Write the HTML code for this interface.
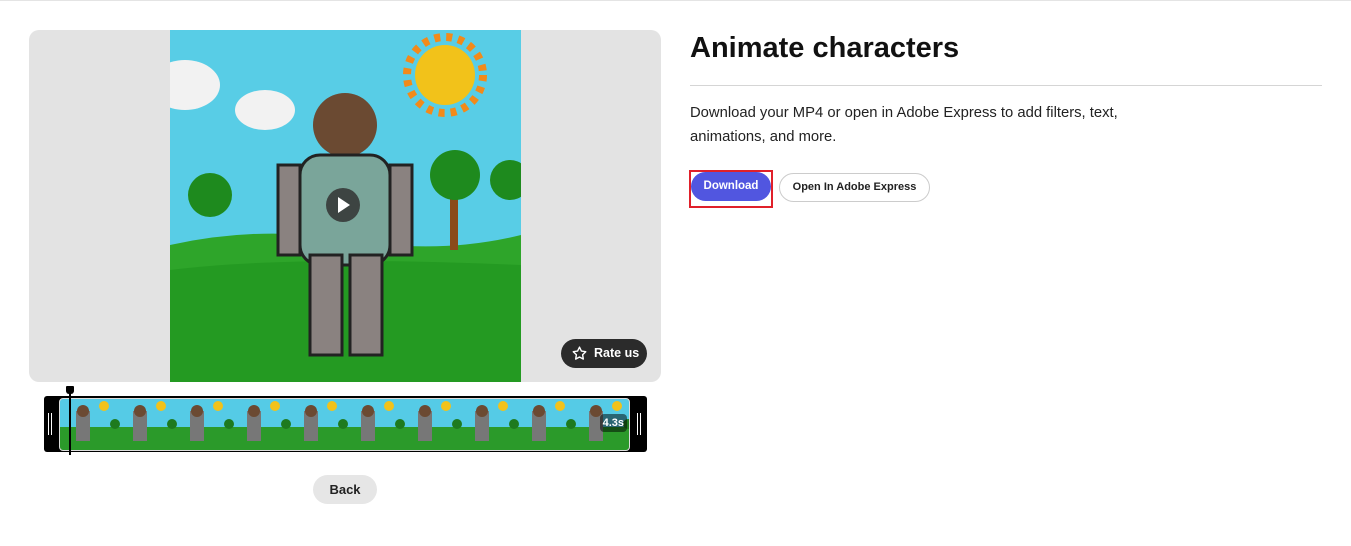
<!DOCTYPE html>
<html><head><style>
body{margin:0;width:1351px;height:546px;background:#fff;font-family:"Liberation Sans",sans-serif;position:relative;overflow:hidden;border-top:1px solid #e4e4e4;box-sizing:border-box}
.abs{position:absolute}
</style></head><body>
<div class="abs" style="left:29px;top:29px;width:632px;height:352px;background:#e3e3e3;border-radius:10px;overflow:hidden">
 <svg class="abs" style="left:141px;top:0" width="351" height="352" viewBox="0 0 351 352">
  <rect width="351" height="352" fill="#58cde6"/>
  <path d="M0 215 Q90 195 180 210 T351 205 V352 H0Z" fill="#2ea52a"/>
  <path d="M0 240 Q120 225 351 235 V352 H0Z" fill="#249a22"/>
  <ellipse cx="15" cy="55" rx="35" ry="25" fill="#f2f2f2"/>
  <ellipse cx="95" cy="80" rx="30" ry="20" fill="#f2f2f2"/>
  <circle cx="275" cy="45" r="30" fill="#f2c21a"/>
  <circle cx="275" cy="45" r="38" fill="none" stroke="#f28a1a" stroke-width="8" stroke-dasharray="6 6"/>
  <rect x="280" y="160" width="8" height="60" fill="#8a4a1a"/><circle cx="285" cy="145" r="25" fill="#1e8a1e"/>
  <circle cx="40" cy="165" r="22" fill="#1e8a1e"/><circle cx="340" cy="150" r="20" fill="#1e8a1e"/>
  <circle cx="175" cy="95" r="32" fill="#6b4a32"/>
  <rect x="130" y="125" width="90" height="110" rx="20" fill="#7aa59a" stroke="#222" stroke-width="3"/>
  <rect x="140" y="225" width="32" height="100" fill="#8a8280" stroke="#222" stroke-width="3"/>
  <rect x="180" y="225" width="32" height="100" fill="#8a8280" stroke="#222" stroke-width="3"/>
  <rect x="108" y="135" width="22" height="90" fill="#8a8280" stroke="#222" stroke-width="3"/>
  <rect x="220" y="135" width="22" height="90" fill="#8a8280" stroke="#222" stroke-width="3"/>
  <circle cx="173" cy="175" r="17" fill="#333" opacity=".85"/><path d="M168 167 L180 175 L168 183Z" fill="#fff"/>
 </svg>
 <div class="abs" style="left:532px;top:309px;width:86px;height:29px;background:#2b2b2b;border-radius:15px;color:#fff;font-size:12.5px;font-weight:bold;line-height:29px">
  <svg class="abs" style="left:10px;top:6px" width="17" height="17" viewBox="0 0 24 24"><path d="M12 3l2.7 5.6 6.1.9-4.4 4.3 1 6.1L12 17l-5.4 2.9 1-6.1L3.2 9.5l6.1-.9z" fill="none" stroke="#fff" stroke-width="2" stroke-linejoin="round"/></svg>
  <span class="abs" style="left:33px">Rate us</span></div>
</div>
<div class="abs" style="left:44px;top:395px;width:603px;height:56px;background:#000;border-radius:3px"></div>
<div class="abs" style="left:59px;top:397px;width:571px;height:53px;border-radius:4px;overflow:hidden;background:linear-gradient(#55cbe6 0 55%,#2b9a2a 55%);border:1px solid #ddd;box-sizing:border-box">
 <svg width="571" height="53">
  <g id="f"><circle cx="44" cy="7" r="5" fill="#f2c21a"/><rect x="16" y="12" width="14" height="30" fill="#777"/><circle cx="23" cy="12" r="6" fill="#6b4a32"/><circle cx="55" cy="25" r="5" fill="#1e7a1e"/></g>
  <use href="#f" x="57"/><use href="#f" x="114"/><use href="#f" x="171"/><use href="#f" x="228"/><use href="#f" x="285"/><use href="#f" x="342"/><use href="#f" x="399"/><use href="#f" x="456"/><use href="#f" x="513"/>
 </svg>
 <div class="abs" style="right:2px;top:15px;background:rgba(0,0,0,.5);color:#fff;font-size:11px;font-weight:bold;padding:3px 3px;border-radius:4px">4.3s</div>
</div>
<div class="abs" style="left:48px;top:412px;height:22px;border-left:1px solid #fff;border-right:1px solid #fff;width:2px"></div>
<div class="abs" style="left:637px;top:412px;width:2px;height:22px;border-left:1px solid #fff;border-right:1px solid #fff"></div>
<div class="abs" style="left:69px;top:385px;width:2px;height:69px;background:#000"></div>
<div class="abs" style="left:66px;top:385px;width:8px;height:8px;background:#000;border-radius:1px 1px 3px 3px"></div>
<div class="abs" style="left:313px;top:474px;width:64px;height:29px;background:#e6e6e6;border-radius:15px;font-size:13px;font-weight:bold;color:#222;text-align:center;line-height:29px">Back</div>
<div class="abs" style="left:690px;top:31px;font-size:29px;font-weight:bold;color:#111">Animate characters</div>
<div class="abs" style="left:690px;top:84px;width:632px;height:1px;background:#d5d5d5"></div>
<div class="abs" style="left:690px;top:100px;font-size:14.8px;line-height:24px;color:#222;width:460px">Download your MP4 or open in Adobe Express to add filters, text, animations, and more.</div>
<div class="abs" style="left:689px;top:169px;width:80px;height:34px;border:2px solid #e0202a;box-sizing:content-box"></div>
<div class="abs" style="left:691px;top:171px;width:80px;height:29px;background:#5156e0;border-radius:15px;color:#fff;font-size:11.5px;font-weight:bold;text-align:center;line-height:29px">Download</div>
<div class="abs" style="left:779px;top:172px;width:149px;height:27px;border:1px solid #ccc;border-radius:15px;color:#222;font-size:11px;font-weight:bold;text-align:center;line-height:27px">Open In Adobe Express</div>
</body></html>
